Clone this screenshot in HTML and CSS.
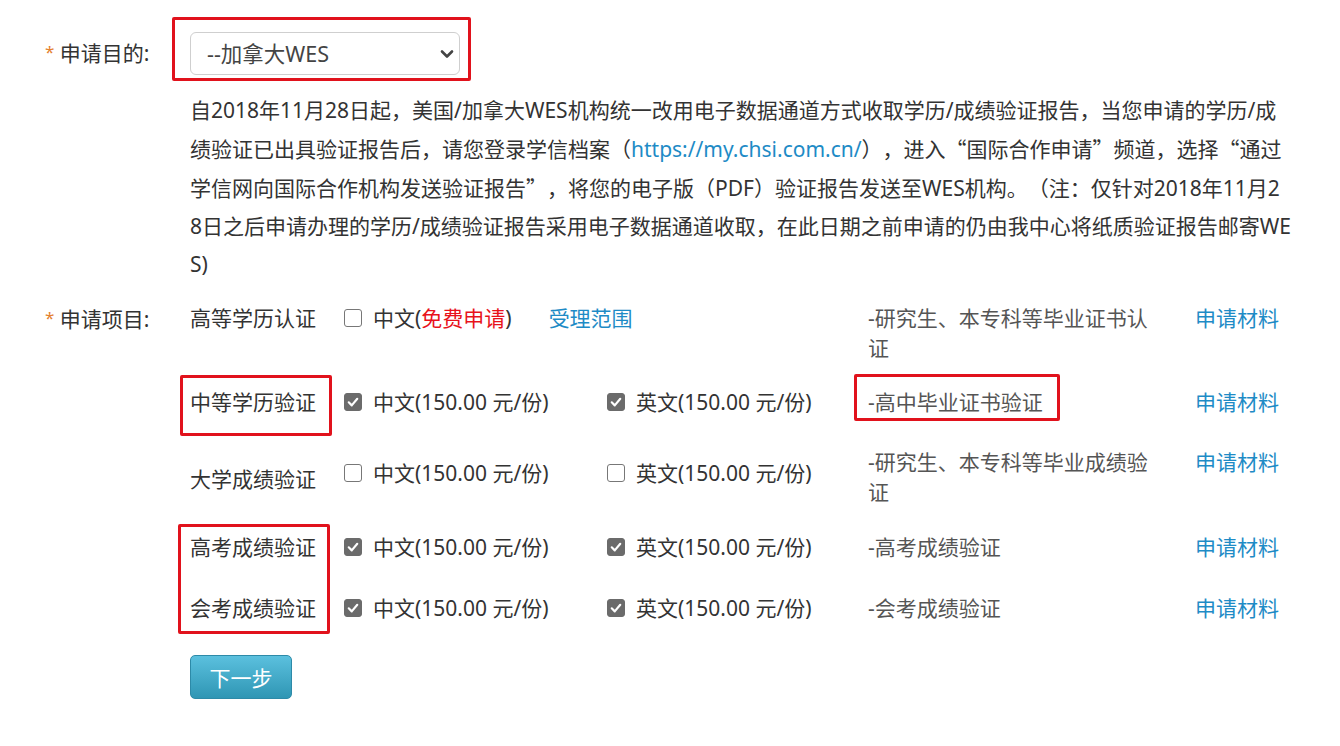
FILE: index.html
```html
<!DOCTYPE html>
<html lang="zh-CN">
<head>
<meta charset="utf-8">
<title>申请</title>
<link rel="stylesheet" href="styles.css">
</head>
<body>
<div class="page">
  <div class="field field-purpose">
    <div class="label"><span class="req">*</span> 申请目的:</div>
    <div class="control">
      <div class="select">
        <span class="select-text">--加拿大WES</span>
        <svg class="chevron" width="14" height="10" viewBox="0 0 14 10"><path d="M2 2.5 L7 7.5 L12 2.5" fill="none" stroke="#444" stroke-width="2.6" stroke-linecap="round" stroke-linejoin="round"/></svg>
        <span class="mark mark-select"></span>
      </div>
      <p class="notice">自2018年11月28日起，美国/加拿大WES机构统一改用电子数据通道方式收取学历/成绩验证报告，当您申请的学历/成<br>绩验证已出具验证报告后，请您登录学信档案（<a class="link" href="#">https://my.chsi.com.cn/</a>），进入<span class="cjk">“</span>国际合作申请<span class="cjk">”</span>频道，选择<span class="cjk">“</span>通过<br>学信网向国际合作机构发送验证报告<span class="cjk">”</span>，将您的电子版（PDF）验证报告发送至WES机构。（注：仅针对2018年11月2<br>8日之后申请办理的学历/成绩验证报告采用电子数据通道收取，在此日期之前申请的仍由我中心将纸质验证报告邮寄WE<br>S)</p>
    </div>
  </div>

  <div class="field field-items">
    <div class="label"><span class="req">*</span> 申请项目:</div>
    <div class="items">
      <div class="row row-1">
        <div class="cell">高等学历认证</div>
        <div class="cell span-2"><span class="cb"></span>中文(<span class="free">免费申请</span>)<a class="link scope" href="#">受理范围</a></div>
        <div class="cell desc">-研究生、本专科等毕业证书认证</div>
        <div class="cell"><a class="link" href="#">申请材料</a></div>
      </div>
      <div class="row row-2">
        <div class="cell">中等学历验证<span class="mark mark-mid"></span></div>
        <div class="cell"><span class="cb on"><svg width="18" height="18" viewBox="0 0 18 18"><path d="M4.2 9.4 L7.6 12.8 L13.8 5.4" fill="none" stroke="#fff" stroke-width="2.4" stroke-linecap="round" stroke-linejoin="round"/></svg></span>中文(150.00 元/份)</div>
        <div class="cell"><span class="cb on"><svg width="18" height="18" viewBox="0 0 18 18"><path d="M4.2 9.4 L7.6 12.8 L13.8 5.4" fill="none" stroke="#fff" stroke-width="2.4" stroke-linecap="round" stroke-linejoin="round"/></svg></span>英文(150.00 元/份)</div>
        <div class="cell desc">-高中毕业证书验证<span class="mark mark-desc"></span></div>
        <div class="cell"><a class="link" href="#">申请材料</a></div>
      </div>
      <div class="row row-3">
        <div class="cell label-low">大学成绩验证</div>
        <div class="cell cb-cell"><span class="cb"></span>中文(150.00 元/份)</div>
        <div class="cell cb-cell"><span class="cb"></span>英文(150.00 元/份)</div>
        <div class="cell desc">-研究生、本专科等毕业成绩验证</div>
        <div class="cell top"><a class="link" href="#">申请材料</a></div>
      </div>
      <div class="row row-4">
        <div class="cell">高考成绩验证<span class="mark mark-exam"></span></div>
        <div class="cell"><span class="cb on"><svg width="18" height="18" viewBox="0 0 18 18"><path d="M4.2 9.4 L7.6 12.8 L13.8 5.4" fill="none" stroke="#fff" stroke-width="2.4" stroke-linecap="round" stroke-linejoin="round"/></svg></span>中文(150.00 元/份)</div>
        <div class="cell"><span class="cb on"><svg width="18" height="18" viewBox="0 0 18 18"><path d="M4.2 9.4 L7.6 12.8 L13.8 5.4" fill="none" stroke="#fff" stroke-width="2.4" stroke-linecap="round" stroke-linejoin="round"/></svg></span>英文(150.00 元/份)</div>
        <div class="cell desc">-高考成绩验证</div>
        <div class="cell"><a class="link" href="#">申请材料</a></div>
      </div>
      <div class="row row-5">
        <div class="cell">会考成绩验证</div>
        <div class="cell"><span class="cb on"><svg width="18" height="18" viewBox="0 0 18 18"><path d="M4.2 9.4 L7.6 12.8 L13.8 5.4" fill="none" stroke="#fff" stroke-width="2.4" stroke-linecap="round" stroke-linejoin="round"/></svg></span>中文(150.00 元/份)</div>
        <div class="cell"><span class="cb on"><svg width="18" height="18" viewBox="0 0 18 18"><path d="M4.2 9.4 L7.6 12.8 L13.8 5.4" fill="none" stroke="#fff" stroke-width="2.4" stroke-linecap="round" stroke-linejoin="round"/></svg></span>英文(150.00 元/份)</div>
        <div class="cell desc">-会考成绩验证</div>
        <div class="cell"><a class="link" href="#">申请材料</a></div>
      </div>
      <div class="actions">
        <button class="btn" type="button">下一步</button>
      </div>
    </div>
  </div>
</div>
</body>
</html>
```

FILE: styles.css
```css
* { box-sizing: border-box; }

html, body {
  margin: 0;
  padding: 0;
  background: #fff;
}

body {
  font-family: "Noto Sans", "Noto Sans CJK SC", sans-serif;
  font-size: 21px;
  color: #333;
  text-spacing-trim: space-all;
}

.page {
  padding-top: 32px;
  width: 1340px;
}

.field {
  display: flex;
  align-items: flex-start;
}

.label {
  flex: none;
  width: 190px;
  padding-left: 45px;
  color: #333;
  white-space: nowrap;
}

.req {
  color: #e4812f;
  font-size: 17px;
  vertical-align: 3px;
}

.field-purpose .label {
  line-height: 40px;
}

.control {
  flex: none;
  width: 1120px;
}

.select {
  position: relative;
  width: 270px;
  height: 43px;
  border: 1px solid #cfcfcf;
  border-radius: 6px;
  background: #fff;
  display: flex;
  align-items: center;
  justify-content: space-between;
  padding: 0 5px 0 16px;
  color: #444;
}

.select-text {
  line-height: 41px;
  font-size: 21.5px;
}

.chevron {
  display: block;
}

.mark {
  position: absolute;
  border: 3px solid #e1121c;
  border-radius: 2px;
  pointer-events: none;
}

.mark-select {
  left: -19px;
  top: -16px;
  width: 299px;
  height: 64px;
}

.notice {
  margin: 16px 0 0 0;
  width: 1110px;
  line-height: 38px;
  word-break: break-all;
  color: #333;
}

.cjk {
  font-family: "Noto Sans CJK SC", sans-serif;
  font-variant-east-asian: full-width;
}

.link {
  color: #1e8bc6;
  text-decoration: none;
}

.field-items {
  margin-top: 20px;
}

.field-items .label {
  line-height: 30px;
}

.items {
  display: flex;
  flex-direction: column;
}

.row {
  display: grid;
  grid-template-columns: 154px 263px 261px 327px 110px;
  line-height: 30px;
}

.cell {
  position: relative;
  display: flex;
  align-items: center;
  white-space: nowrap;
}

.cell.span-2 {
  grid-column: span 2;
}

.scope {
  margin-left: 37px;
}

.cell.desc {
  white-space: normal;
  color: #555;
  max-width: 292px;
}

.row-1 { height: 62px; }
.row-1 .cell { align-items: flex-start; }
.row-2 { height: 74px; }
.row-3 { height: 76px; }
.row-4 { height: 64px; }
.row-5 { height: 58px; }

.row-3 .label-low { padding-top: 4px; }
.row-3 .cb-cell { padding-bottom: 8px; }
.row-3 .cell.top { align-items: flex-start; padding-top: 8px; }

.row-1 .cb { margin-top: 6px; }

.cb {
  flex: none;
  width: 18px;
  height: 18px;
  border: 1px solid #777;
  border-radius: 3px;
  background: #fff;
  margin-right: 11px;
  display: inline-flex;
  align-items: center;
  justify-content: center;
}

.cb.on {
  background: #6b6b6b;
  border-color: #6b6b6b;
}

.cb svg {
  display: block;
}

.free {
  color: #e8121b;
}

.mark-mid {
  left: -10px;
  top: 10px;
  width: 152px;
  height: 61px;
}

.mark-desc {
  left: -14px;
  top: 9px;
  width: 206px;
  height: 47px;
}

.mark-exam {
  left: -12px;
  top: 9px;
  width: 152px;
  height: 110px;
}

.actions {
  margin-top: 18px;
}

.btn {
  width: 102px;
  height: 44px;
  border: 1px solid #2d8aa8;
  border-radius: 5px;
  background: linear-gradient(to bottom, #5bc0de, #2f96b4);
  color: #fff;
  font-family: "Noto Sans CJK SC", sans-serif;
  font-size: 21px;
  padding: 0;
  cursor: pointer;
}
```
